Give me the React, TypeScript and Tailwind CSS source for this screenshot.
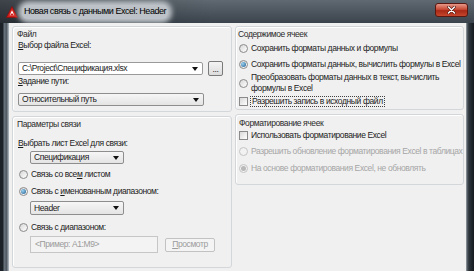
import type { ReactNode } from 'react';

function U({ children }: { children: ReactNode }) {
  return <span className="underline underline-offset-[1px]">{children}</span>;
}

function Radio({ checked = false, disabled = false }: { checked?: boolean; disabled?: boolean }) {
  return (
    <span
      className={`w-[9px] h-[9px] rounded-full border shrink-0 flex items-center justify-center ${
        disabled
          ? 'border-[#c4c4c4] bg-[#f2f2f2]'
          : 'border-[#8a8a8a] bg-[linear-gradient(135deg,#d6d6d6,#ffffff)]'
      }`}
    >
      {checked && (
        <span
          className={`w-[5px] h-[5px] rounded-full ${
            disabled
              ? 'bg-[#b8b8b8]'
              : 'bg-[radial-gradient(circle_at_35%_35%,#9ad2f2,#1d5a8c)]'
          }`}
        />
      )}
    </span>
  );
}

function Check() {
  return (
    <span className="w-[9px] h-[9px] border border-[#8a8a8a] bg-[linear-gradient(135deg,#d8d8d8,#ffffff)] shrink-0" />
  );
}

function Arrow() {
  return (
    <svg width="6" height="4" viewBox="0 0 6 4" className="shrink-0">
      <path d="M0 0 L6 0 L3 4 Z" fill="#111" />
    </svg>
  );
}

function Combo({ value, width, white = false }: { value: string; width: string; white?: boolean }) {
  return (
    <div
      className={`${width} h-[13px] border rounded-[2px] flex items-center pl-[3px] pr-[4px] ${
        white
          ? 'bg-white border-[#9a9a9a]'
          : 'border-[#8e8e8e] bg-[linear-gradient(180deg,#f6f6f6,#e4e4e4)]'
      }`}
    >
      <span className="flex-1 truncate">{value}</span>
      <Arrow />
    </div>
  );
}

function Group({ title, className, children }: { title: string; className: string; children?: ReactNode }) {
  return (
    <div
      className={`border border-[#d3d7da] rounded-[3px] shadow-[inset_1px_1px_0_#ffffff] flex flex-col whitespace-nowrap ${className}`}
    >
      <div className="text-[#2b2b2b]">{title}</div>
      {children}
    </div>
  );
}

export default function App() {
  return (
    <div className="w-[474px] h-[271px] flex flex-col overflow-hidden bg-[#2f373f] text-[8.5px] leading-[11px] tracking-[-0.4px] text-[#1c1c1c] font-['Liberation_Sans',Arial,sans-serif]">
      {/* Title bar */}
      <div className="h-[23px] shrink-0 flex items-center bg-[linear-gradient(to_right,rgba(0,0,0,0.35),rgba(0,0,0,0)_45%),linear-gradient(180deg,#606971,#3b444d)]">
        <svg width="12" height="12" viewBox="0 0 12 12" className="ml-[6px] shrink-0">
          <path d="M6 0.5 L11.6 11.5 L0.4 11.5 Z" fill="#d21e1a" stroke="#8a0c0a" strokeWidth="0.6" />
          <path d="M6 4.2 L8.4 9.2 L3.6 9.2 Z" fill="#ffffff" />
          <rect x="4.6" y="7.6" width="2.8" height="1.6" fill="#d21e1a" />
        </svg>
        <span className="ml-[4px] px-[2px] h-[14px] flex items-center bg-[#bcc2c7] rounded-[6px] shadow-[0_0_5px_4px_#bcc2c7] text-black text-[9px] tracking-[-0.45px]">
          Новая связь с данными Excel: Header
        </span>
        <div className="flex-1" />
        <div className="self-start mt-[3px] mr-[6px] w-[33px] h-[14px] rounded-[3px] border border-[#5a1810] bg-[linear-gradient(180deg,#e6988a,#c94a35_45%,#a82a17_55%,#c4462c)] flex items-center justify-center">
          <svg width="9" height="8" viewBox="0 0 9 8">
            <path d="M1.5 1 L7.5 7 M7.5 1 L1.5 7" stroke="#4a120a" strokeWidth="2.6" strokeLinecap="round" />
            <path d="M1.5 1 L7.5 7 M7.5 1 L1.5 7" stroke="#ffffff" strokeWidth="1.5" strokeLinecap="round" />
          </svg>
        </div>
      </div>

      {/* Body */}
      <div className="flex flex-1 min-h-0">
        <div className="w-[9px] shrink-0 bg-[linear-gradient(to_right,#1b2127_0,#1b2127_3px,#6b757e_4px,#4d565f_7px,#a3abb2_8px)]" />

        <div className="flex-1 bg-[#f0f0f0] flex gap-[3px] pt-[3px] pl-[3px] pr-[2px]">
          {/* Left column */}
          <div className="w-[220px] flex flex-col gap-[4px]">
            <Group title="Файл" className="h-[86px] pl-[4px] pt-[2px]">
              <div className="pl-[1px]">
                <U>В</U>ыбор файла Excel:
              </div>
              <div className="mt-[10px] h-[15px] flex items-center gap-[5px] pl-[1px]">
                <Combo value="C:\Project\Спецификация.xlsx" width="w-[185px]" white />
                <div className="w-[15px] h-[15px] border border-[#7a7a7a] rounded-[2px] bg-[linear-gradient(180deg,#f4f4f4,#dcdcdc)] flex items-end justify-center pb-[3px] leading-[6px]">
                  ...
                </div>
              </div>
              <div className="pl-[1px]">
                <U>З</U>адание пути:
              </div>
              <div className="mt-[6px] pl-[1px]">
                <Combo value="Относительный путь" width="w-[186px]" />
              </div>
            </Group>

            <Group title="Параметры связи" className="flex-1 pl-[4px] pt-[2px] mb-[3px]">
              <div className="mt-[8px] pl-[1px]">
                <U>В</U>ыбрать лист Excel для связи:
              </div>
              <div className="mt-[2px] pl-[13px]">
                <Combo value="Спецификация" width="w-[94px]" />
              </div>
              <div className="mt-[5px] flex items-center gap-[3px] pl-[2px]">
                <Radio />
                <span>
                  Связь со все<U>м</U> листом
                </span>
              </div>
              <div className="mt-[6px] flex items-center gap-[3px] pl-[2px]">
                <Radio checked />
                <span>
                  Связь с <U>и</U>менованным диапазоном:
                </span>
              </div>
              <div className="mt-[4px] pl-[13px]">
                <div className="w-[94px] h-[14px] border border-[#8e8e8e] rounded-[2px] bg-[linear-gradient(180deg,#f6f6f6,#e4e4e4)] flex items-center pl-[3px] pr-[4px]">
                  <span className="flex-1">Header</span>
                  <Arrow />
                </div>
              </div>
              <div className="mt-[7px] flex items-center gap-[3px] pl-[2px]">
                <Radio />
                <span>
                  Связь с <U>д</U>иапазоном:
                </span>
              </div>
              <div className="mt-[3px] pl-[13px] flex items-center gap-[7px]">
                <div className="w-[128px] h-[17px] border border-[#c6c6c6] bg-[#f3f3f3] flex items-center pl-[4px] text-[#9a9a9a]">
                  &lt;Пример: A1:M9&gt;
                </div>
                <div className="w-[50px] h-[14px] border border-[#c2c2c2] rounded-[2px] bg-[#f4f4f4] flex items-center justify-center text-[#9c9c9c]">
                  <span>
                    <U>П</U>росмотр
                  </span>
                </div>
              </div>
            </Group>
          </div>

          {/* Right column */}
          <div className="flex-1 flex flex-col gap-[4px]">
            <Group title="Содержимое ячеек" className="h-[84px] pl-[2px] pt-[2px]">
              <div className="mt-[3px] flex items-center gap-[3px] pl-[1px]">
                <Radio />
                <span>Сохранить форматы данных и формулы</span>
              </div>
              <div className="mt-[5px] flex items-center gap-[3px] pl-[1px]">
                <Radio checked />
                <span>Сохранить форматы данных, вычислить формулы в Excel</span>
              </div>
              <div className="mt-[2px] flex items-center gap-[3px] pl-[1px]">
                <Radio />
                <span>
                  Преобразовать форматы данных в текст, вычислить
                  <br />
                  формулы в Excel
                </span>
              </div>
              <div className="mt-[2px] flex items-center gap-[2px] pl-[1px]">
                <Check />
                <span className="border border-dotted border-[#404040] leading-[9px] px-[1px]">
                  Разрешить запись в исходный файл
                </span>
              </div>
            </Group>

            <Group title="Форматирование ячеек" className="h-[71px] pl-[3px] pt-[3px]">
              <div className="mt-[1px] flex items-center gap-[3px]">
                <Check />
                <span>Использовать форматирование Excel</span>
              </div>
              <div className="mt-[5px] flex items-center gap-[3px] text-[#a6a6a6]">
                <Radio disabled />
                <span>Разрешить обновление форматирования Excel в таблицах</span>
              </div>
              <div className="mt-[6px] flex items-center gap-[3px] text-[#a6a6a6]">
                <Radio checked disabled />
                <span>На основе форматирования Excel, не обновлять</span>
              </div>
            </Group>
          </div>
        </div>

        <div className="w-[8px] shrink-0 bg-[linear-gradient(to_right,#a9b0b6_0,#5a636c_1px,#2d343b_3px,#141a1f_8px)]" />
      </div>
    </div>
  );
}
